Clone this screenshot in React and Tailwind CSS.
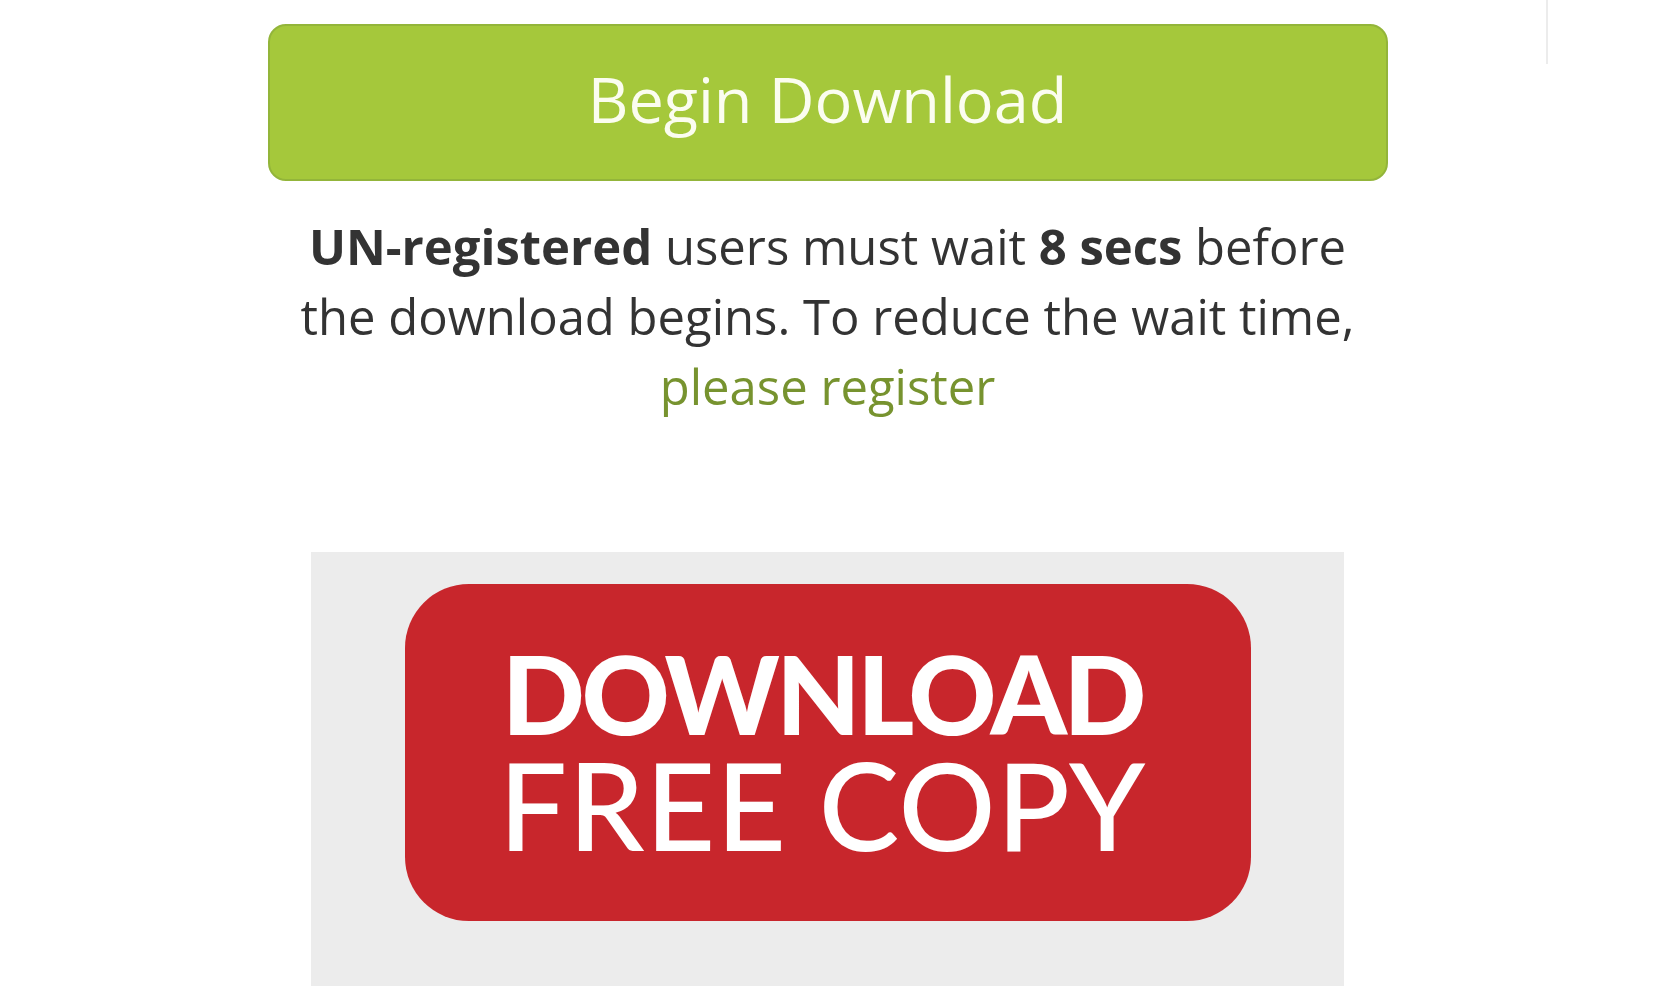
export default function App() {
  return (
    <div className="relative min-h-[986px] w-full overflow-hidden bg-white" style={{ fontFamily: '"Open Sans", sans-serif' }}>
      <div className="absolute left-[1546px] top-0 h-[64px] w-[2px] bg-[#ececec]" />
      <div className="mx-auto flex w-[1120px] flex-col items-center pt-[24px]">
        <div className="flex h-[157px] w-[1120px] items-center justify-center rounded-[18px] border-2 border-[#93b53a] bg-[#a5c83b] pb-[8px]">
          <span className="text-[63px] leading-none text-[#fbfdf0]" style={{ fontFamily: '"Open Sans", sans-serif' }}>Begin Download</span>
        </div>
        <p className="mt-[30px] w-[1100px] text-center text-[49px] leading-[70px] text-[#333333]">
          <b className="font-bold">UN-registered</b> users must wait <b className="font-bold">8 secs</b> before the download begins. To reduce the wait time,{' '}
          <span className="text-[#77932f]">please register</span>
        </p>
      </div>
      <div className="mx-auto mt-[131px] flex h-[440px] w-[1033px] justify-center bg-[#ececec] pt-[32px]">
        <div className="flex h-[337px] w-[846px] flex-col items-center justify-start rounded-[64px] bg-[#c8262c] pr-[10px] pt-[54px] text-white" style={{ fontFamily: 'Lato, sans-serif' }}>
          <div className="text-[109px] font-black leading-[110px] tracking-[-3.5px]">DOWNLOAD</div>
          <div className="mt-[2px] text-[121px] font-medium leading-[110px] tracking-[1px]">FREE COPY</div>
        </div>
      </div>
    </div>
  );
}
